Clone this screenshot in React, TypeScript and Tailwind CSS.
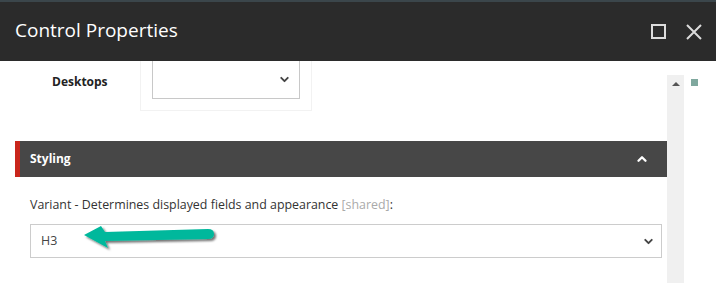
import { ChevronDown, ChevronUp } from "lucide-react";

export default function App() {
  return (
    <div className="relative h-[283px] w-[716px] overflow-hidden bg-white font-['Open_Sans',sans-serif] text-[#333]">
      <div className="h-[2px] bg-[#3b464b]" />
      <header className="flex h-[59px] items-center justify-between bg-[#2b2b2b] pl-[15px] pr-[14px]">
        <h1 className="pb-[2px] text-[19px] font-normal text-white">Control Properties</h1>
        <div className="flex items-center gap-[20px]">
          <span className="block h-[15px] w-[15px] border-2 border-[#dcdcdc]" />
          <svg width="16" height="16" viewBox="0 0 16 16" className="text-[#dcdcdc]">
            <path d="M1 1 L15 15 M15 1 L1 15" stroke="currentColor" strokeWidth="2" />
          </svg>
        </div>
      </header>

      <div className="flex">
        <main className="w-[667px] pl-[15px]">
          <div className="flex">
            <div className="w-[125px] pl-[37px] pt-[12px] text-[12px] font-bold text-[#222]">Desktops</div>
            <div className="w-[172px] border-x border-b border-[#f2f2f2] px-[11px] pb-[11px]">
              <div className="flex h-[38px] items-center justify-end border-x border-b border-[#c8c8c8] pr-[8px]">
                <ChevronDown size={13} strokeWidth={3.5} className="text-[#444]" />
              </div>
            </div>
          </div>

          <div className="mt-[30px] flex h-[36px] items-center justify-between border-l-[5px] border-[#c9261c] bg-[#474747] pl-[10px] pr-[18px]">
            <span className="text-[12px] font-bold text-white">Styling</span>
            <ChevronUp size={14} strokeWidth={4} className="text-white" />
          </div>

          <div className="pl-[15px] pr-[5px]">
            <p className="mt-[19px] text-[12.4px] leading-[18px] text-[#333]">
              Variant - Determines displayed fields and appearance <span className="text-[#aaa]">[shared]</span>:
            </p>
            <div className="relative mt-[10px] flex h-[34px] items-center justify-between border border-[#cccccc] pl-[10px] pr-[6px]">
              <span className="text-[12.4px] text-[#444]">H3</span>
              <ChevronDown size={13} strokeWidth={3.5} className="text-[#444]" />
              <svg width="140" height="30" viewBox="0 0 140 30" className="absolute left-[50px] top-[-2px]">
                <defs>
                  <filter id="sh" x="-10%" y="-30%" width="120%" height="170%">
                    <feDropShadow dx="2" dy="2" stdDeviation="1.2" floodColor="#000" floodOpacity="0.55" />
                  </filter>
                </defs>
                <path
                  d="M3 12 L20 3 L24 9 L127 6 Q133 6 133 11 Q133 16 127 16 L24 18 L27 25 Z"
                  fill="#00b89c"
                  filter="url(#sh)"
                />
              </svg>
            </div>
          </div>
        </main>

        <div className="mt-[14px] flex h-[208px] w-[17px] justify-center bg-[#f0f0f0] pt-[7px]">
          <span className="block h-0 w-0 border-x-[4px] border-b-[4px] border-x-transparent border-b-[#555]" />
        </div>
        <div className="pl-[7px] pt-[18px]">
          <span className="block h-[7px] w-[7px] bg-[#7fa89e]" />
        </div>
      </div>
    </div>
  );
}
